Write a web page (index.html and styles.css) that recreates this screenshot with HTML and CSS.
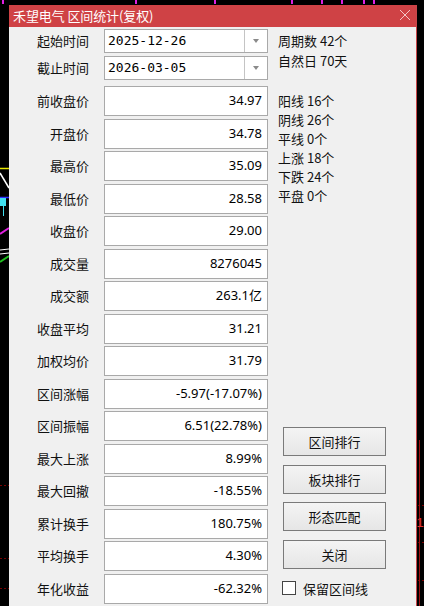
FILE: index.html
```html
<!DOCTYPE html>
<html lang="zh-CN">
<head>
<meta charset="utf-8">
<title>区间统计</title>
<link rel="stylesheet" href="styles.css">
</head>
<body>
<svg class="chart-bg" width="424" height="606" viewBox="0 0 424 606" xmlns="http://www.w3.org/2000/svg">
  <g stroke="#e020e0" stroke-width="2">
    <line x1="3" y1="0" x2="3" y2="4"/>
    <line x1="136" y1="0" x2="136" y2="4"/>
    <line x1="215" y1="0" x2="215" y2="4"/>
    <line x1="292" y1="0" x2="292" y2="4"/>
    <line x1="322" y1="0" x2="322" y2="4"/>
    <line x1="342" y1="0" x2="342" y2="4"/>
    <line x1="364" y1="0" x2="364" y2="4"/>
    <line x1="374" y1="0" x2="374" y2="4"/>
  </g>
  <line x1="0" y1="168.5" x2="9" y2="168.5" stroke="#e8e800" stroke-width="1.5"/>
  <line x1="0" y1="173" x2="9" y2="188" stroke="#ffffff" stroke-width="1.5"/>
  <line x1="0" y1="197.5" x2="9" y2="197.5" stroke="#3030ff" stroke-width="1.5"/>
  <rect x="0" y="198" width="6" height="8" fill="#40e0f0"/>
  <line x1="3.5" y1="206" x2="3.5" y2="216" stroke="#40e0f0" stroke-width="1"/>
  <line x1="0" y1="234" x2="9" y2="228" stroke="#e020e0" stroke-width="2"/>
  <line x1="0" y1="250" x2="9" y2="249" stroke="#ffffff" stroke-width="1"/>
  <line x1="0" y1="254" x2="9" y2="253" stroke="#ffffff" stroke-width="1"/>
  <line x1="0" y1="262" x2="9" y2="256" stroke="#20c020" stroke-width="2"/>
  <g stroke="#7a0000" stroke-width="1" stroke-dasharray="2 2">
    <line x1="0" y1="485.5" x2="9" y2="485.5"/>
    <line x1="0" y1="558.5" x2="9" y2="558.5"/>
    <line x1="0" y1="588.5" x2="9" y2="588.5"/>
    <line x1="418" y1="505.5" x2="424" y2="505.5"/>
    <line x1="418" y1="542.5" x2="424" y2="542.5"/>
    <line x1="418" y1="580.5" x2="424" y2="580.5"/>
  </g>
  <line x1="419.5" y1="440" x2="419.5" y2="606" stroke="#9a1010" stroke-width="1"/>
  <text x="416.5" y="527" fill="#e03030" font-family="Liberation Sans, sans-serif" font-size="13">1</text>
</svg>

<div class="dialog">
  <div class="titlebar">
    <span class="title">禾望电气 区间统计(复权)</span>
    <svg class="close" width="12" height="12" viewBox="0 0 12 12" xmlns="http://www.w3.org/2000/svg">
      <path d="M1 1 L11 11 M11 1 L1 11" stroke="#f3c6c6" stroke-width="1" fill="none"/>
    </svg>
  </div>
  <div class="body">
    <div class="fields">
      <div class="row combo-row">
        <span class="label">起始时间</span>
        <div class="combo"><span class="combo-text">2025-12-26</span><span class="combo-btn"><i class="arrow"></i></span></div>
      </div>
      <div class="row combo-row">
        <span class="label">截止时间</span>
        <div class="combo"><span class="combo-text">2026-03-05</span><span class="combo-btn"><i class="arrow"></i></span></div>
      </div>
      <div class="boxes">
        <div class="row"><span class="label">前收盘价</span><div class="box">34.97</div></div>
        <div class="row"><span class="label">开盘价</span><div class="box">34.78</div></div>
        <div class="row"><span class="label">最高价</span><div class="box">35.09</div></div>
        <div class="row"><span class="label">最低价</span><div class="box">28.58</div></div>
        <div class="row"><span class="label">收盘价</span><div class="box">29.00</div></div>
        <div class="row"><span class="label">成交量</span><div class="box">8276045</div></div>
        <div class="row"><span class="label">成交额</span><div class="box">263.1亿</div></div>
        <div class="row"><span class="label">收盘平均</span><div class="box">31.21</div></div>
        <div class="row"><span class="label">加权均价</span><div class="box">31.79</div></div>
        <div class="row"><span class="label">区间涨幅</span><div class="box">-5.97(-17.07%)</div></div>
        <div class="row"><span class="label">区间振幅</span><div class="box">6.51(22.78%)</div></div>
        <div class="row"><span class="label">最大上涨</span><div class="box">8.99%</div></div>
        <div class="row"><span class="label">最大回撤</span><div class="box">-18.55%</div></div>
        <div class="row"><span class="label">累计换手</span><div class="box">180.75%</div></div>
        <div class="row"><span class="label">平均换手</span><div class="box">4.30%</div></div>
        <div class="row"><span class="label">年化收益</span><div class="box">-62.32%</div></div>
      </div>
    </div>
    <div class="side">
      <div class="stats1">
        <div>周期数 42个</div>
        <div>自然日 70天</div>
      </div>
      <div class="stats2">
        <div>阳线 16个</div>
        <div>阴线 26个</div>
        <div>平线 0个</div>
        <div>上涨 18个</div>
        <div>下跌 24个</div>
        <div>平盘 0个</div>
      </div>
      <div class="buttons">
        <button class="btn">区间排行</button>
        <button class="btn">板块排行</button>
        <button class="btn">形态匹配</button>
        <button class="btn">关闭</button>
      </div>
      <label class="check"><span class="checkbox"></span><span>保留区间线</span></label>
    </div>
  </div>
</div>
</body>
</html>
```

FILE: styles.css
```css
html, body {
  margin: 0;
  padding: 0;
}

body {
  width: 424px;
  height: 606px;
  overflow: hidden;
  background: #000;
  position: relative;
  font-family: "Noto Sans CJK SC", "Noto Sans", sans-serif;
  font-size: 13px;
  color: #111;
  padding: 5px 0 0 9px;
  box-sizing: border-box;
}

.chart-bg {
  position: absolute;
  left: 0;
  top: 0;
}

.dialog {
  position: relative;
  z-index: 1;
  width: 408px;
  height: 601px;
  overflow: hidden;
  background: #f0f0f0;
  box-sizing: border-box;
  border-right: 1px solid #c9474a;
}

.titlebar {
  height: 22px;
  background: #cf4245;
  color: #fff;
  display: flex;
  align-items: center;
  justify-content: space-between;
  padding: 0 5px 0 4px;
}

.title {
  font-size: 13px;
  line-height: 22px;
  letter-spacing: -0.1px;
}

.close {
  display: block;
  margin-top: -2px;
}

.body {
  display: flex;
  padding-top: 2px;
}

.fields {
  width: 259px;
  display: flex;
  flex-direction: column;
}

.row {
  display: flex;
  align-items: center;
  gap: 15px;
}

.label {
  width: 80px;
  text-align: right;
  white-space: nowrap;
  line-height: 16px;
}

.combo-row {
  height: 24px;
  margin-bottom: 3px;
}

.combo {
  width: 164px;
  height: 24px;
  box-sizing: border-box;
  border: 1px solid #a9a9a9;
  background: #fff;
  display: flex;
}

.combo-text {
  flex: 1;
  font-family: "DejaVu Sans Mono", "Liberation Mono", monospace;
  font-size: 13px;
  line-height: 22px;
  padding-left: 3px;
  color: #000;
}

.combo-btn {
  width: 22px;
  border-left: 1px solid #c4c4c4;
  display: flex;
  align-items: center;
  justify-content: center;
}

.arrow {
  width: 0;
  height: 0;
  border-left: 3.5px solid transparent;
  border-right: 3.5px solid transparent;
  border-top: 4px solid #8a8a8a;
}

.boxes {
  margin-top: 3px;
  display: flex;
  flex-direction: column;
  gap: 2.5px;
}

.boxes .row {
  height: 30px;
}

.box {
  width: 164px;
  height: 30px;
  box-sizing: border-box;
  border: 1px solid #a9a9a9;
  background: #fff;
  text-align: right;
  padding-right: 5px;
  font-family: "Noto Sans", "Noto Sans CJK SC", sans-serif;
  font-size: 13px;
  line-height: 27px;
  color: #000;
}

.side {
  margin-left: 10px;
  display: flex;
  flex-direction: column;
  align-items: flex-start;
}

.stats1 {
  margin-top: 2px;
  line-height: 20px;
}

.stats2 {
  margin-top: 19.5px;
  line-height: 19px;
}

.buttons {
  margin-top: 222.5px;
  margin-left: 5px;
  display: flex;
  flex-direction: column;
  gap: 8.5px;
}

.btn {
  width: 103px;
  height: 29px;
  box-sizing: border-box;
  border: 1px solid #7a7a7a;
  background: linear-gradient(#f4f4f4, #e6e6e6);
  font-family: "Noto Sans CJK SC", "Noto Sans", sans-serif;
  font-size: 13px;
  color: #111;
  padding: 0;
  line-height: 27px;
}

.check {
  margin-top: 9.5px;
  margin-left: 4px;
  height: 20px;
  display: flex;
  align-items: center;
  gap: 7px;
}

.checkbox {
  width: 14px;
  height: 14px;
  box-sizing: border-box;
  border: 1px solid #444;
  background: #fff;
}
```
